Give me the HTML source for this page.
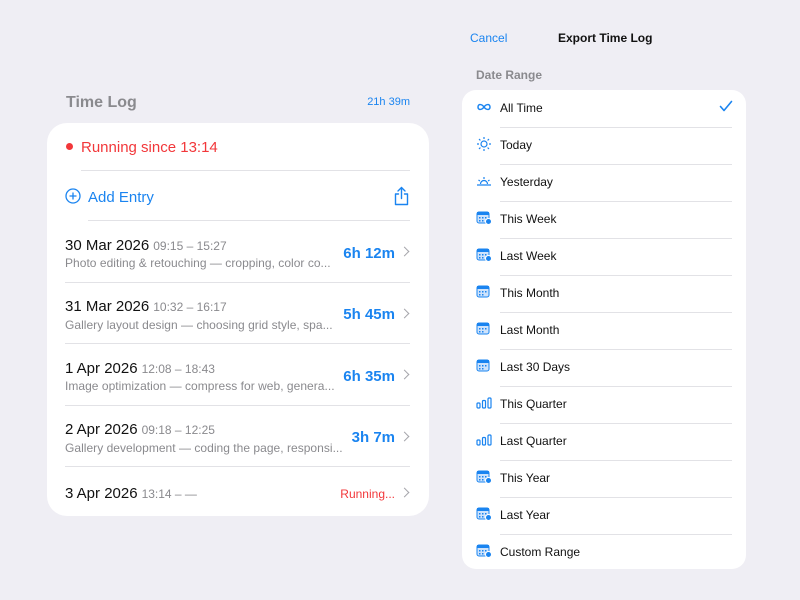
<!DOCTYPE html>
<html><head><meta charset="utf-8"><style>
*{margin:0;padding:0;box-sizing:border-box}
body{width:800px;height:600px;background:#efeef4;font-family:"Liberation Sans",sans-serif;position:relative;overflow:hidden}
.a{position:absolute;white-space:nowrap}
.blue{color:#1a84f0}
.card{position:absolute;background:#fff}
.sep{position:absolute;height:1px;background:#e2e2e6}
.chev{position:absolute;width:7px;height:7px;border-right:1.5px solid #a6a6ab;border-top:1.5px solid #a6a6ab;transform:rotate(45deg)}
.lt{font-size:15px;color:#111}
.lt span{font-size:12px;color:#8a8a8e;margin-left:4px}
.sub{font-size:12px;color:#8a8a8e;letter-spacing:0.03px}
.dur{font-size:15px;color:#1a84f0;font-weight:bold}
.r{font-size:12px;color:#111}
</style></head><body>
<div class="a" style="left:66px;top:94px;font-size:16px;font-weight:bold;color:#8a8a8e">Time Log</div>
<div class="a blue" style="right:390px;top:96px;font-size:11px">21h 39m</div>
<div class="card" style="left:47px;top:123px;width:382px;height:393px;border-radius:20px"></div>
<div class="a" style="left:66px;top:143px;width:7px;height:7px;border-radius:50%;background:#f2373a"></div>
<div class="a" style="left:81px;top:139px;font-size:15px;color:#f2373a">Running since 13:14</div>
<div class="sep" style="left:81px;top:170px;width:329px"></div>
<svg class="a" style="left:65px;top:188px" width="16" height="16" viewBox="0 0 16 16"><circle cx="8" cy="8" r="7" fill="none" stroke="#1a84f0" stroke-width="1.3"/><path d="M8 4.5v7M4.5 8h7" stroke="#1a84f0" stroke-width="1.3"/></svg>
<div class="a blue" style="left:88px;top:189px;font-size:15px">Add Entry</div>
<svg class="a" style="left:393px;top:186px" width="17" height="20" viewBox="0 0 17 20"><path d="M5.5 8H2.5v10.5h12V8h-3M8.5 12.5V1.5M5 5l3.5-3.5L12 5" fill="none" stroke="#1a84f0" stroke-width="1.4" stroke-linecap="round" stroke-linejoin="round"/></svg>
<div class="sep" style="left:88px;top:220px;width:322px"></div>

<div class="a lt" style="left:65px;top:237px">30 Mar 2026<span>09:15 – 15:27</span></div>
<div class="a sub" style="left:65px;top:256px">Photo editing &amp; retouching — cropping, color co...</div>
<div class="a dur" style="right:405px;top:245px">6h 12m</div><div class="chev" style="left:401px;top:248px"></div>
<div class="sep" style="left:65px;top:282px;width:345px"></div>

<div class="a lt" style="left:65px;top:298px">31 Mar 2026<span>10:32 – 16:17</span></div>
<div class="a sub" style="left:65px;top:318px">Gallery layout design — choosing grid style, spa...</div>
<div class="a dur" style="right:405px;top:306px">5h 45m</div><div class="chev" style="left:401px;top:310px"></div>
<div class="sep" style="left:65px;top:343px;width:345px"></div>

<div class="a lt" style="left:65px;top:360px">1 Apr 2026<span>12:08 – 18:43</span></div>
<div class="a sub" style="left:65px;top:379px">Image optimization — compress for web, genera...</div>
<div class="a dur" style="right:405px;top:368px">6h 35m</div><div class="chev" style="left:401px;top:371px"></div>
<div class="sep" style="left:65px;top:405px;width:345px"></div>

<div class="a lt" style="left:65px;top:421px">2 Apr 2026<span>09:18 – 12:25</span></div>
<div class="a sub" style="left:65px;top:441px">Gallery development — coding the page, responsi...</div>
<div class="a dur" style="right:405px;top:429px">3h 7m</div><div class="chev" style="left:401px;top:433px"></div>
<div class="sep" style="left:65px;top:466px;width:345px"></div>

<div class="a lt" style="left:65px;top:485px">3 Apr 2026<span>13:14 – —</span></div>
<div class="a" style="right:405px;top:487px;font-size:12px;color:#f2373a">Running...</div><div class="chev" style="left:401px;top:489px"></div>

<div class="a blue" style="left:470px;top:31px;font-size:12px">Cancel</div>
<div class="a" style="left:558px;top:31px;font-size:12px;font-weight:bold;color:#111">Export Time Log</div>
<div class="a" style="left:476px;top:68px;font-size:12px;font-weight:bold;color:#8a8a8e">Date Range</div>
<div class="card" style="left:462px;top:90px;width:284px;height:479px;border-radius:14px"></div>
<div id="rows"></div>
<script>
var names=["All Time","Today","Yesterday","This Week","Last Week","This Month","Last Month","Last 30 Days","This Quarter","Last Quarter","This Year","Last Year","Custom Range"];
var B="#1a84f0",h="";
function cal(badge){return '<svg width="16" height="14" viewBox="0 0 16 14"><rect x="1" y="1" width="12" height="11" rx="2" fill="#cfe3fb" stroke="'+B+'" stroke-width="1"/><rect x="1" y="1" width="12" height="3" fill="'+B+'"/><g fill="'+B+'"><rect x="3" y="6" width="1.5" height="1.5"/><rect x="6" y="6" width="1.5" height="1.5"/><rect x="9" y="6" width="1.5" height="1.5"/><rect x="3" y="9" width="1.5" height="1.5"/><rect x="6" y="9" width="1.5" height="1.5"/></g>'+(badge?'<circle cx="12.5" cy="10.5" r="3" fill="'+B+'" stroke="#fff" stroke-width="1"/>':'')+'</svg>';}
function icon(i){
 if(i==0)return '<svg width="16" height="10" viewBox="0 0 16 10"><path d="M8 5C6 2 2 1.5 2 5s4 3 6 0 6-3.5 6 0-4 3-6 0" fill="none" stroke="'+B+'" stroke-width="1.5"/></svg>';
 if(i==1)return '<svg width="16" height="16" viewBox="0 0 16 16"><circle cx="8" cy="8" r="3" fill="none" stroke="'+B+'" stroke-width="1.2"/><path d="M8 1v2M8 13v2M1 8h2M13 8h2M3 3l1.4 1.4M11.6 11.6L13 13M3 13l1.4-1.4M11.6 4.4L13 3" stroke="'+B+'" stroke-width="1.2"/></svg>';
 if(i==2)return '<svg width="16" height="14" viewBox="0 0 16 14"><path d="M4.5 10a3.5 3.5 0 0 1 7 0M1 11h14M8 3v2M2.5 6l1.4 1M13.5 6l-1.4 1" fill="none" stroke="'+B+'" stroke-width="1.2"/></svg>';
 if(i==8||i==9)return '<svg width="16" height="12" viewBox="0 0 16 12"><rect x="1" y="6" width="3" height="5" rx="1" fill="none" stroke="'+B+'" stroke-width="1.2"/><rect x="6.5" y="3.5" width="3" height="7.5" rx="1" fill="none" stroke="'+B+'" stroke-width="1.2"/><rect x="12" y="1" width="3" height="10" rx="1" fill="none" stroke="'+B+'" stroke-width="1.2"/></svg>';
 return cal(i==3||i==4||i>=10);
}
for(var i=0;i<13;i++){var c=90+37*i+17;
 h+='<div class="a" style="left:475px;top:'+(c-8)+'px;width:17px;height:16px;display:flex;align-items:center;justify-content:center">'+icon(i)+'</div>';
 h+='<div class="a r" style="left:500px;top:'+(c-6)+'px">'+names[i]+'</div>';
 if(i<12)h+='<div class="sep" style="left:500px;top:'+(90+37*(i+1))+'px;width:232px"></div>';}
h+='<svg class="a" style="left:719px;top:100px" width="14" height="12" viewBox="0 0 14 12"><path d="M1.5 6.5l3.5 4L12.5 1.5" fill="none" stroke="'+B+'" stroke-width="1.6" stroke-linecap="round" stroke-linejoin="round"/></svg>';
document.getElementById('rows').innerHTML=h;
</script>
</body></html>
